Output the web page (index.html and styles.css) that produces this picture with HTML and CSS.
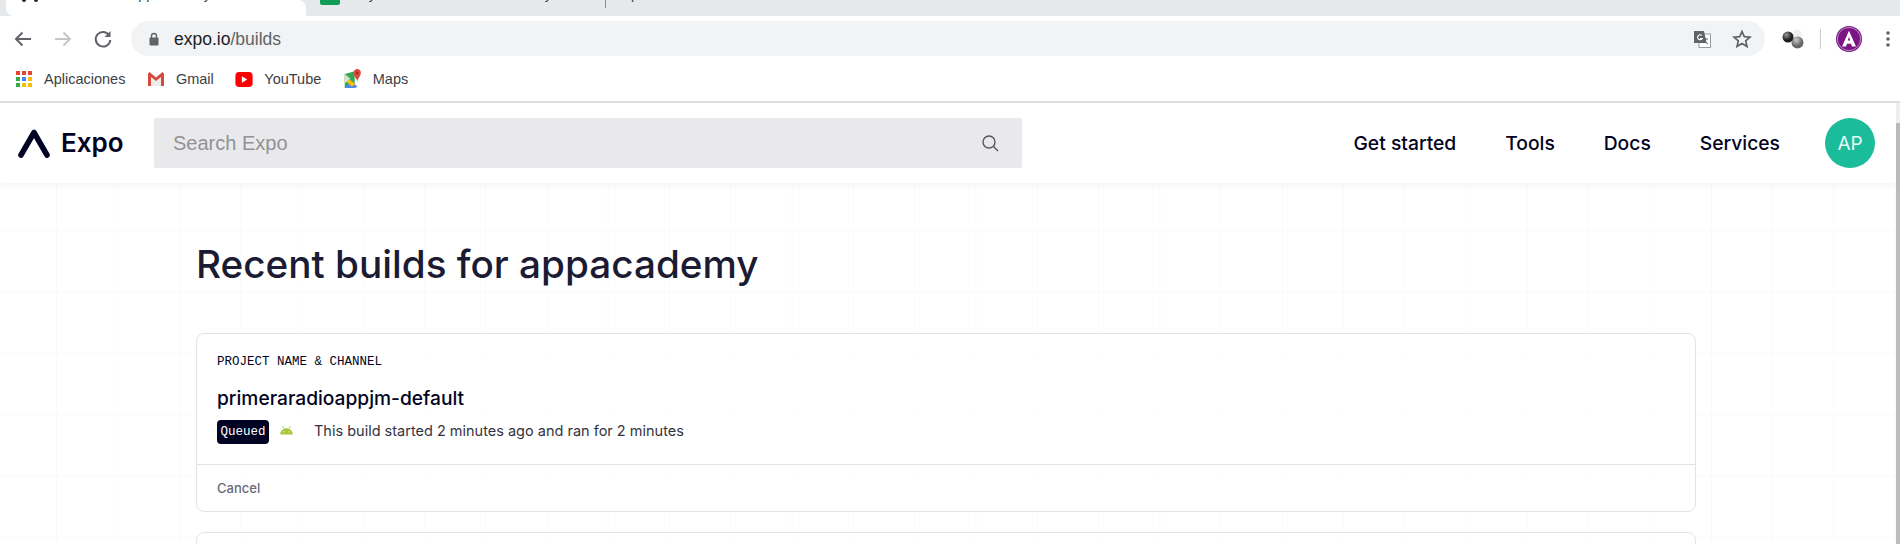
FILE: index.html
```html
<!DOCTYPE html>
<html>
<head>
<meta charset="utf-8">
<title>Expo builds</title>
<link rel="stylesheet" href="styles.css">
</head>
<body>
<div class="tabstrip">
  <div class="tab tab-active">
    <svg class="tab-logo" width="16" height="3" viewBox="0 0 16 3"><circle cx="2" cy="0" r="2" fill="#222"/><circle cx="14" cy="0" r="2" fill="#222"/></svg>
    <span class="tab-title">Builds - appacademy</span>
  </div>
  <div class="tab tab-second">
    <span class="tab-sheet"></span>
    <span class="tab-title">Proyecto de radio de la academy</span>
  </div>
  <div class="tab tab-third"><span class="tab-title">p</span></div>
</div>

<div class="toolbar">
  <svg class="nav-icon" width="24" height="24" viewBox="0 0 24 24"><path d="M20 12H5M11.500 5.500L5 12l6.500 6.500" fill="none" stroke="#5f6368" stroke-width="2"/></svg>
  <svg class="nav-icon" width="24" height="24" viewBox="0 0 24 24"><path d="M4 12h15M12.500 5.500L19 12l-6.500 6.500" fill="none" stroke="#c4c7ca" stroke-width="2"/></svg>
  <svg class="nav-icon" width="24" height="24" viewBox="0 0 24 24"><path d="M18.300 8.500A7.300 7.300 0 1 0 19.300 13" fill="none" stroke="#5f6368" stroke-width="2"/><path d="M19.500 4v6h-6z" fill="#5f6368"/></svg>
  <div class="omnibox">
    <svg class="lock" width="12" height="14" viewBox="0 0 12 14"><path d="M3.500 6V4a2.500 2.500 0 0 1 5 0v2" fill="none" stroke="#5f6368" stroke-width="1.400"/><rect x="1.500" y="5.500" width="9" height="8" rx="1" fill="#5f6368"/></svg>
    <span class="url">expo.io<span class="url-path">/builds</span></span>
    <svg class="translate" width="18" height="18" viewBox="0 0 18 18"><rect x="6" y="4" width="11.500" height="13.500" fill="#fff" stroke="#9a9da0"/><path d="M1 1h10l2.500 12H1z" fill="#5f6368"/><path d="M9 5.500a2.500 2.500 0 1 0 .3 3H7" fill="none" stroke="#fff" stroke-width="1.100"/><path d="M10 9h5M12.500 8v1c0 2-1.500 3.500-2.500 4M11.500 11c.8 1 2 2 3.500 3" fill="none" stroke="#5f6368"/></svg>
    <svg class="star" width="20" height="20" viewBox="0 0 20 20"><path d="M10 2.500l2.300 5.200 5.700.5-4.300 3.700 1.300 5.600L10 14.600l-5 2.900 1.300-5.600L2 8.200l5.700-.5z" fill="none" stroke="#5f6368" stroke-width="1.700"/></svg>
  </div>
  <svg class="ext" width="22" height="20" viewBox="0 0 22 20">
    <defs>
      <radialGradient id="ball1" cx="35%" cy="30%"><stop offset="0" stop-color="#999"/><stop offset="1" stop-color="#1c1c1c"/></radialGradient>
      <radialGradient id="ball2" cx="40%" cy="30%"><stop offset="0" stop-color="#ccc"/><stop offset="1" stop-color="#666"/></radialGradient>
    </defs>
    <circle cx="15" cy="5" r="4.500" fill="#eee"/>
    <circle cx="15.500" cy="13.500" r="6" fill="url(#ball2)"/>
    <circle cx="6" cy="8" r="5.500" fill="url(#ball1)"/>
  </svg>
  <span class="toolbar-sep"></span>
  <svg class="profile" width="26" height="28" viewBox="0 0 28 28"><circle cx="14" cy="14" r="14" fill="#7b1583"/><circle cx="14" cy="14" r="12.500" fill="none" stroke="#d9b6dc" stroke-width=".8"/><path d="M14 5l7.500 17h-4.300l-1-2.800h-4.400l-1 2.800H6.500zM14 11.500l-1.300 4h2.600z" fill="#fff" fill-rule="evenodd"/></svg>
  <svg class="menu-dots" width="6" height="18" viewBox="0 0 6 18"><circle cx="3" cy="3" r="1.800" fill="#5f6368"/><circle cx="3" cy="9" r="1.800" fill="#5f6368"/><circle cx="3" cy="15" r="1.800" fill="#5f6368"/></svg>
</div>

<div class="bookmarks">
  <div class="bookmark">
    <span class="apps">
      <i class="red"></i><i class="red"></i><i class="red"></i>
      <i class="green"></i><i class="blue"></i><i class="yellow"></i>
      <i class="green"></i><i class="yellow"></i><i class="yellow"></i>
    </span>
    Aplicaciones
  </div>
  <div class="bookmark">
    <svg width="18" height="14" viewBox="0 0 16 14"><path d="M1 1l7 6 7-6v13H1z" fill="#eee"/><path d="M0 1.500V14h3V5l5 4 5-4v9h3V1.500L14.500 0 8 5.500 1.500 0z" fill="#d54c3f"/></svg>
    Gmail
  </div>
  <div class="bookmark">
    <svg width="18" height="15" viewBox="0 0 16 14"><rect width="16" height="14" rx="3.500" fill="#f00"/><path d="M6 4l5 3-5 3z" fill="#fff"/></svg>
    YouTube
  </div>
  <div class="bookmark">
    <svg width="19" height="20" viewBox="0 0 16 18"><path d="M1 4.500l9-2.500v12l-9 3z" fill="#35a853"/><path d="M1 17l6-6.500 5.500 5.500-2.500 1z" fill="#4a8af4"/><path d="M1 6l9.500 7.500-3 2.500L1 10z" fill="#fbbc04"/><path d="M1 4.500L6 8.500 1 13z" fill="#cfe3d4"/><path d="M12 0a3.500 3.500 0 0 1 3.500 3.500C15.500 6 12.500 9 12.500 11 12 9 9 6 9 3.500A3.500 3.500 0 0 1 12 0z" fill="#e0483e"/><circle cx="12.200" cy="3.500" r="1.200" fill="#9d2a22"/></svg>
    Maps
  </div>
</div>

<div class="viewport">
  <div class="page">
    <header class="site-header">
      <div class="brand">
        <svg width="32" height="29" viewBox="0 0 32 29"><path d="M3 26L16 3.500 29 26" fill="none" stroke="#020322" stroke-width="5.500" stroke-linecap="round" stroke-linejoin="round"/></svg>
        <span class="brand-name">Expo</span>
      </div>
      <div class="search">
        <span class="search-text">Search Expo</span>
        <svg width="20" height="20" viewBox="0 0 20 20"><circle cx="9" cy="9" r="6" fill="none" stroke="#55565e" stroke-width="1.400"/><path d="M13.500 13.500L18 18" stroke="#55565e" stroke-width="1.400"/></svg>
      </div>
      <nav class="site-nav">
        <a>Get started</a>
        <a>Tools</a>
        <a>Docs</a>
        <a>Services</a>
      </nav>
      <div class="avatar">AP</div>
    </header>

    <main class="content">
      <h1>Recent builds for appacademy</h1>
      <section class="card">
        <div class="card-body">
          <div class="card-label">PROJECT NAME &amp; CHANNEL</div>
          <div class="card-name">primeraradioappjm-default</div>
          <div class="card-meta">
            <span class="badge">Queued</span>
            <svg class="android" width="15" height="9" viewBox="0 0 16 10"><path d="M1 9.500a7 7 0 0 1 14 0z" fill="#a4c639"/><path d="M3.500 0l2 3M12.500 0l-2 3" stroke="#a4c639"/><circle cx="5" cy="6.500" r=".8" fill="#fff"/><circle cx="11" cy="6.500" r=".8" fill="#fff"/></svg>
            <span class="meta-text">This build started 2 minutes ago and ran for 2 minutes</span>
          </div>
        </div>
        <div class="card-foot">Cancel</div>
      </section>
      <section class="card card-next"></section>
    </main>
  </div>
  <div class="scrollbar"></div>
</div>
</body>
</html>
```

FILE: styles.css
```css
html, body { margin: 0; padding: 0; height: 544px; overflow: hidden; background: #fff; }
body { font-family: "Inter", "Liberation Sans", sans-serif; color: #020322; }

/* browser chrome */
.tabstrip { height: 16px; background: #e6e9ec; display: flex; overflow: hidden; font-family: "Liberation Sans", sans-serif; font-size: 14px; color: #3c4043; }
.tab { display: flex; align-items: flex-start; height: 16px; flex: none; box-sizing: border-box; line-height: 16px; }
.tab-active { width: 300px; margin-left: 6px; background: #fff; border-radius: 0 8px 0 8px; padding-left: 16px; gap: 42px; }
.tab-logo { flex: none; }
.tab-title { white-space: nowrap; overflow: hidden; margin-top: -14px; padding-bottom: 4px; }
.tab-second { width: 299px; padding-left: 14px; gap: 7px; }
.tab-sheet { width: 20px; height: 5px; background: #0f9d58; border-radius: 0 0 2px 2px; flex: none; }
.tab-third { border-left: 1px solid #8a8d91; height: 8px; padding-left: 25px; }

.toolbar { height: 45px; background: #fff; display: flex; align-items: center; box-sizing: border-box; padding-left: 11px; }
.nav-icon { flex: none; margin-right: 16px; }
.omnibox { width: 1634px; height: 35px; background: #f1f3f4; border-radius: 18px; display: flex; align-items: center; box-sizing: border-box; padding: 0 13px 0 17px; flex: none; }
.lock { flex: none; }
.url { font-family: "Liberation Sans", sans-serif; font-size: 17.5px; color: #202124; margin-left: 14px; padding-top: 1px; flex: 1; }
.url-path { color: #5f6368; }
.translate { margin-right: 21px; }
.ext { margin-left: 17px; flex: none; }
.toolbar-sep { width: 1px; height: 20px; background: #c9ccd0; margin-left: 16px; flex: none; }
.profile { flex: none; margin-left: 15px; }
.menu-dots { flex: none; margin-left: 23px; }

.bookmarks { height: 40px; background: #fff; display: flex; align-items: center; padding: 0 0 4px 16px; gap: 21.5px; font-family: "Liberation Sans", sans-serif; font-size: 14.5px; color: #3c4043; box-sizing: border-box; }
.bookmark { display: flex; align-items: center; gap: 11px; }
.bookmark .apps { margin-right: 1px; }
.apps { display: grid; grid-template-columns: repeat(3, 4px); grid-auto-rows: 4px; gap: 2px; }
.apps i { display: block; }
.apps .red { background: #ea4335; }
.apps .green { background: #34a853; }
.apps .blue { background: #4285f4; }
.apps .yellow { background: #fbbc04; }

/* page */
.viewport { height: 441px; border-top: 2px solid #dcdde3; display: flex; overflow: hidden; }
.page { flex: 1; min-width: 0; background-color: #fff;
  background-image: linear-gradient(#fafafb 1px, transparent 1px), linear-gradient(90deg, #fafafb 1px, transparent 1px);
  background-size: 61.3px 61.3px; background-position: 56px 4.4px; }
.scrollbar { width: 4px; flex: none; background: linear-gradient(#f1f1f1 20px, #bdbdbd 20px); }

.site-header { height: 80px; background: #fff; box-shadow: 0 2px 8px rgba(2, 3, 34, 0.05); display: flex; align-items: center; padding: 0 21px 0 18px; position: relative; }
.brand { display: flex; align-items: center; gap: 11px; width: 136px; flex: none; }
.brand-name { font-size: 26px; font-weight: 600; padding-bottom: 1px; line-height: 30px; }
.search { width: 868px; height: 50px; background: #e9e9eb; border-radius: 2px; display: flex; align-items: center; justify-content: space-between; padding: 0 22px 0 19px; box-sizing: border-box; flex: none; }
.search-text { font-family: "Liberation Sans", sans-serif; font-size: 20px; color: #929296; }
.site-nav { display: flex; gap: 48.9px; margin-left: auto; font-size: 19.3px; font-weight: 500; }
.avatar { width: 50px; height: 50px; margin-left: 45px; border-radius: 50%; background: #1abc9c; color: #e8f8f5; display: flex; align-items: center; justify-content: center; font-size: 19px; flex: none; }

.content { width: 1500px; margin-left: 196px; }
h1 { margin: 56px 0 44px; font-size: 38.7px; line-height: 50px; font-weight: 500; color: #1b1b33; }
.card { border: 1px solid #e3e3e6; border-radius: 8px; background: rgba(255, 255, 255, 0.7); }
.card-body { padding: 20px 20px 20px; }
.card-label { font-family: "Liberation Mono", monospace; font-size: 12.5px; line-height: 16px; }
.card-name { font-size: 19.2px; font-weight: 500; line-height: 24px; margin-top: 16px; }
.card-meta { display: flex; align-items: center; margin-top: 10px; font-size: 14.5px; line-height: 22px; color: #33333f; }
.badge { background: #020322; color: #fff; border-radius: 4px; font-family: "Liberation Mono", monospace; font-size: 12.5px; height: 24px; line-height: 24px; width: 52px; text-align: center; margin-right: 10px; flex: none; }
.android { flex: none; margin-top: -3px; margin-right: 20px; }
.meta-text { padding-bottom: 2px; }
.card-foot { border-top: 1px solid #e3e3e6; height: 46px; line-height: 46px; padding-left: 20px; font-size: 13px; font-weight: 500; color: #6a6a78; }
.card-next { height: 60px; margin-top: 20px; }
```
